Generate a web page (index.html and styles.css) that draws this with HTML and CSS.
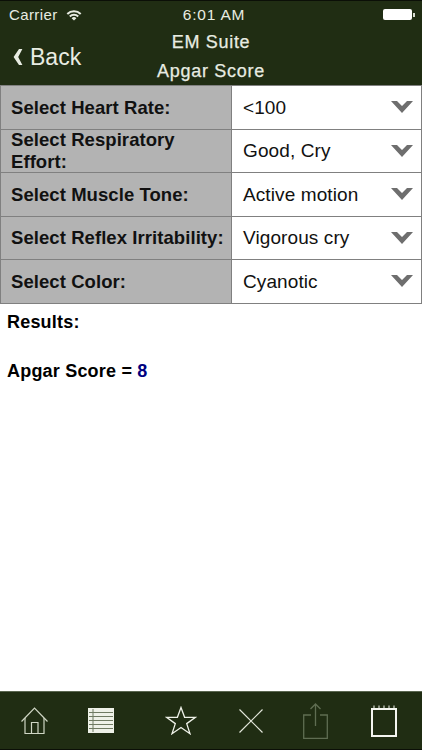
FILE: index.html
```html
<!DOCTYPE html>
<html>
<head>
	<meta charset="UTF-8">
	<title>Apgar Score</title>
	<link rel="stylesheet" href="styles.css">
</head>
<body>
	<div class="page">
		<div class="header">
			<div class="status">
				<div class="carrier">
					<span>Carrier</span>
					<svg class="wifi" width="16" height="12" viewBox="0 0 16 12">
						<path d="M0.6 4.2A10.6 10.6 0 0 1 15.4 4.2L14 5.7A8.6 8.6 0 0 0 2 5.7Z" fill="#e8ece2"/>
						<path d="M3.1 6.8A7 7 0 0 1 12.9 6.8L11.5 8.2A5 5 0 0 0 4.5 8.2Z" fill="#e8ece2"/>
						<path d="M5.6 9.2A3.4 3.4 0 0 1 10.4 9.2L8 11.6Z" fill="#e8ece2"/>
					</svg>
				</div>
				<div class="time">6:01 AM</div>
				<div class="battery"><span class="battery-body"></span><span class="battery-tip"></span></div>
			</div>
			<div class="nav">
				<div class="back">
					<svg width="11" height="18" viewBox="0 0 11 18"><path d="M7 1H10.4L6.2 9L10.4 17H7L1.6 9Z" fill="#e8ece2"/></svg>
					<span>Back</span>
				</div>
				<div class="titles">
					<div>EM Suite</div>
					<div>Apgar Score</div>
				</div>
			</div>
		</div>

		<div class="form">
			<div class="row">
				<div class="label">Select Heart Rate:</div>
				<div class="value"><span>&lt;100</span><svg class="arrow" width="22" height="12" viewBox="0 0 22 12"><path d="M0 0H6L11 5L16 0H22L11 12Z"/></svg></div>
			</div>
			<div class="row">
				<div class="label label-two">Select Respiratory Effort:</div>
				<div class="value"><span>Good, Cry</span><svg class="arrow" width="22" height="12" viewBox="0 0 22 12"><path d="M0 0H6L11 5L16 0H22L11 12Z"/></svg></div>
			</div>
			<div class="row">
				<div class="label">Select Muscle Tone:</div>
				<div class="value"><span>Active motion</span><svg class="arrow" width="22" height="12" viewBox="0 0 22 12"><path d="M0 0H6L11 5L16 0H22L11 12Z"/></svg></div>
			</div>
			<div class="row">
				<div class="label">Select Reflex Irritability:</div>
				<div class="value"><span>Vigorous cry</span><svg class="arrow" width="22" height="12" viewBox="0 0 22 12"><path d="M0 0H6L11 5L16 0H22L11 12Z"/></svg></div>
			</div>
			<div class="row">
				<div class="label">Select Color:</div>
				<div class="value"><span>Cyanotic</span><svg class="arrow" width="22" height="12" viewBox="0 0 22 12"><path d="M0 0H6L11 5L16 0H22L11 12Z"/></svg></div>
			</div>
		</div>

		<div class="results">
			<div class="results-title">Results:</div>
			<div class="score">Apgar Score = <span class="score-num">8</span></div>
		</div>

		<div class="toolbar">
			<svg class="tool-home" width="27" height="28" viewBox="0 0 27 28" fill="none" stroke="#cfd6c4" stroke-width="1.2">
				<path d="M0.5 14.5L13.5 1L26.5 14.5"/>
				<path d="M4 11V26.5H23V11"/>
				<path d="M10.5 26.5V15.5H17V26.5"/>
			</svg>
			<svg class="tool-list" width="26" height="25" viewBox="0 0 26 25">
				<rect width="26" height="25" fill="#eef1e8"/>
				<path d="M1 4.5H25M1 8.5H25M1 12.5H25M1 16.5H25M1 20.5H25M5 1V24" stroke="#6f7a62" stroke-width="1" fill="none"/>
			</svg>
			<svg class="tool-star" width="32" height="29" viewBox="0 0 32 29" fill="none" stroke="#eef1e8" stroke-width="1.3">
				<path d="M16 1.5L19.6 11.3H30.5L21.7 17.6L25 27.7L16 21.5L7 27.7L10.3 17.6L1.5 11.3H12.4Z"/>
			</svg>
			<svg class="tool-close" width="24" height="24" viewBox="0 0 24 24" fill="none" stroke="#e2e6da" stroke-width="1.2">
				<path d="M0.5 0.5L23.5 23.5M23.5 0.5L0.5 23.5"/>
			</svg>
			<svg class="tool-share" width="25" height="36" viewBox="0 0 25 36" fill="none" stroke="#5f6d52" stroke-width="1.3">
				<path d="M8 12H0.7V35.3H24.3V12H17"/>
				<path d="M12.5 23V1M7.5 6L12.5 1L17.5 6"/>
			</svg>
			<svg class="tool-note" width="26" height="32" viewBox="0 0 26 32" fill="none" stroke="#f4f6f0">
				<rect x="1" y="4" width="24" height="27" stroke-width="2"/>
				<path d="M3 0.5V4M8 0.5V4M13 0.5V4M18 0.5V4M23 0.5V4" stroke-width="1"/>
			</svg>
		</div>
	</div>
</body>
</html>
```

FILE: styles.css
```css
html,body{
	margin: 0;
	padding: 0;
}
body{
	background: #fff;
	font-family: "Liberation Sans", Arial, sans-serif;
	color: #000;
}
.page{
	height: 750px;
	display: flex;
	flex-direction: column;
}
.header{
	height: 85px;
	background: #202d13;
	border-top: 1px solid #0b0f07;
	box-sizing: border-box;
	color: #e8ece2;
}
.status{
	height: 27px;
	padding: 0 7px 0 9px;
	display: grid;
	grid-template-columns: 1fr auto 1fr;
	align-items: center;
	font-size: 15px;
}
.carrier{
	display: flex;
	align-items: center;
	gap: 8px;
	letter-spacing: 0.4px;
}
.time{
	margin-left: 4px;
	font-size: 15.5px;
	letter-spacing: 0.8px;
}
.battery{
	display: flex;
	align-items: center;
	justify-content: flex-end;
}
.battery-body{
	width: 29px;
	height: 11px;
	background: #fff;
	border-radius: 2px;
}
.battery-tip{
	width: 2px;
	height: 4px;
	margin-left: 1px;
	background: #d8dcd2;
}
.nav{
	height: 57px;
	display: grid;
	grid-template-columns: 1fr auto 1fr;
	align-items: center;
}
.back{
	display: flex;
	align-items: center;
	gap: 7px;
	padding-left: 12px;
	font-size: 23px;
}
.titles{
	text-align: center;
	font-size: 18px;
	line-height: 29px;
	letter-spacing: 0.7px;
	-webkit-text-stroke: 0.25px #e8ece2;
}
.form{
	background: #808080;
	border: solid #808080;
	border-width: 1px 1px 0 1px;
}
.row{
	height: 43.5px;
	box-sizing: border-box;
	border-bottom: 1.5px solid #808080;
	display: grid;
	grid-template-columns: 231px 1fr;
	grid-template-rows: minmax(0, 1fr);
}
.label{
	background: #b3b3b3;
	padding: 1px 4px 0 10px;
	border-right: 1px solid #808080;
	display: flex;
	align-items: center;
	font-size: 18.5px;
	font-weight: bold;
	color: #111;
	letter-spacing: 0.07px;
}
.label-two{
	padding-top: 0;
	line-height: 21.5px;
}
.value{
	background: #fff;
	padding: 1px 8px 0 11px;
	display: flex;
	align-items: center;
	justify-content: space-between;
	font-size: 19px;
	color: #111;
	letter-spacing: 0.1px;
}
.arrow{
	fill: #6e6e6e;
	margin-top: -1px;
}
.results{
	flex: 1;
	padding: 7px 7px 0;
	font-size: 18px;
	font-weight: bold;
	line-height: 22px;
	letter-spacing: 0.2px;
}
.results-title{
	margin-bottom: 27px;
}
.score-num{
	color: #00007f;
}
.toolbar{
	height: 59px;
	box-sizing: border-box;
	background: #202d13;
	border-top: 1px solid #5a6650;
	border-bottom: 1px solid #0b0f07;
	padding-left: 21px;
	display: flex;
	align-items: center;
}
.tool-list{
	margin-left: 40px;
}
.tool-star{
	margin-left: 51px;
}
.tool-close{
	margin-left: 42px;
}
.tool-share{
	margin-left: 40px;
}
.tool-note{
	margin-left: 43px;
}
```
